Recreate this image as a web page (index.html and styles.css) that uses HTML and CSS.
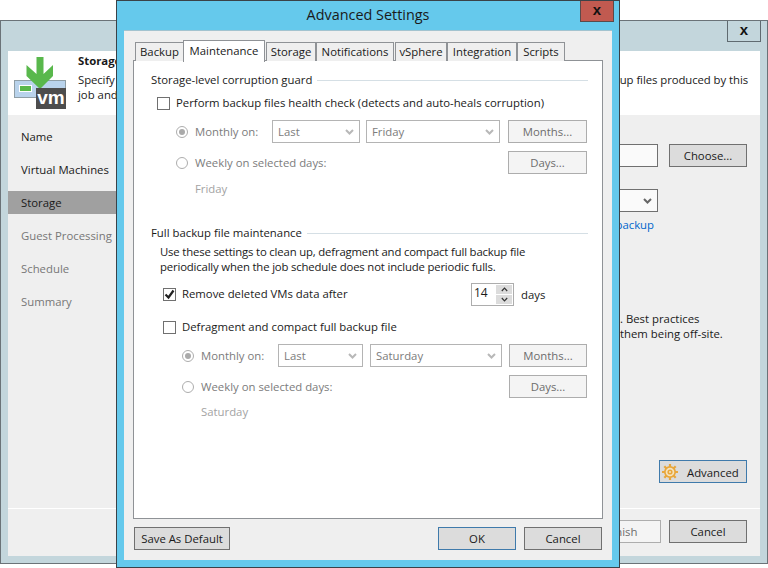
FILE: index.html
```html
<!DOCTYPE html>
<html lang="en">
<head>
<meta charset="utf-8">
<title>Advanced Settings</title>
<link rel="stylesheet" href="styles.css">
</head>
<body>
<svg class="defs" width="0" height="0" aria-hidden="true">
  <symbol id="chev" viewBox="0 0 9 6"><path d="M1 1l3.5 3.5L8 1" fill="none" stroke="currentColor" stroke-width="2"/></symbol>
</svg>

<section class="wizard">
  <div class="titlebar wizard-title"><span class="close close-plain">x</span></div>
  <div class="wizard-inner">
    <header class="wizard-head">
      <svg class="logo" width="54" height="54" viewBox="0 0 54 54">
        <rect x="0.500" y="24.500" width="51" height="17" fill="#b9d3ec" stroke="#8f9ea6"/>
        <rect x="5.500" y="29.500" width="12" height="6" fill="#59b84c" stroke="#fff"/>
        <path d="M22.500 1h7v17l9.500-9v11L26 33 12.500 20V9l10 9z" fill="#59b84c"/>
        <rect x="22" y="32" width="30" height="21" fill="#4d4d4d"/>
        <text x="37" y="48" class="logo-text" text-anchor="middle">vm</text>
      </svg>
      <div class="head-text">
        <div class="head-title">Storage</div>
        <div class="head-line">Specify processing proxy server to be used for source data retrieval, backup repository to store the backup files produced by this</div>
        <div>job and customize advanced job settings if required.</div>
      </div>
    </header>
    <div class="wizard-body">
      <nav class="steps">
        <div class="step">Name</div>
        <div class="step">Virtual Machines</div>
        <div class="step step-on">Storage</div>
        <div class="step step-off">Guest Processing</div>
        <div class="step step-off">Schedule</div>
        <div class="step step-off">Summary</div>
      </nav>
      <main class="wizard-main">
        <div class="path-row">
          <span class="field field-wide"></span>
          <span class="btn btn-w78">Choose...</span>
        </div>
        <div class="repo-row"><span class="field field-wide field-select"><svg class="chev chev-on" width="9" height="6"><use href="#chev"/></svg></span></div>
        <div class="map-row"><a class="link">Map backup</a></div>
        <div class="note">. Best practices<br>them being off-site.</div>
        <div class="adv-row">
          <span class="btn btn-adv">
            <svg class="gear" width="16" height="16" viewBox="0 0 16 16">
              <g stroke="#e8a73c" stroke-width="2.200">
                <path d="M8 0v16M0 8h16M2.300 2.300l11.400 11.400M13.700 2.300L2.300 13.700"/>
              </g>
              <circle cx="8" cy="8" r="6" fill="#e8a73c"/>
              <circle cx="8" cy="8" r="4.300" fill="#f6e3bd"/>
              <circle cx="8" cy="8" r="2.600" fill="#e8a73c"/>
              <circle cx="8" cy="8" r="1" fill="#f6e3bd"/>
            </svg>
            Advanced
          </span>
        </div>
      </main>
    </div>
    <footer class="wizard-foot">
      <span class="btn btn-w78 btn-off">Finish</span>
      <span class="btn btn-w78">Cancel</span>
    </footer>
  </div>
</section>

<section class="dialog">
  <div class="titlebar dialog-title">
    <span class="dialog-name">Advanced Settings</span>
    <span class="close close-red">x</span>
  </div>
  <div class="dialog-inner">
    <div class="tabs">
      <span class="tab tab-a">Backup</span>
      <span class="tab tab-on">Maintenance</span>
      <span class="tab tab-c">Storage</span>
      <span class="tab tab-d">Notifications</span>
      <span class="tab tab-e">vSphere</span>
      <span class="tab tab-f">Integration</span>
      <span class="tab tab-g">Scripts</span>
    </div>
    <div class="panel">
      <div class="legend"><span class="lbl">Storage-level corruption guard</span></div>
      <div class="check-row cr-1"><span class="box"></span><span class="lbl">Perform backup files health check (detects and auto-heals corruption)</span></div>
      <div class="opt-grid g1 first">
        <span class="radio-label"><span class="radio radio-on"></span>Monthly on:</span>
        <span class="sel">Last<svg class="chev" width="9" height="6"><use href="#chev"/></svg></span>
        <span class="sel">Friday<svg class="chev" width="9" height="6"><use href="#chev"/></svg></span>
        <span class="btn btn-off">Months...</span>
      </div>
      <div class="opt-grid g1 second">
        <span class="radio-label wide"><span class="radio"></span>Weekly on selected days:</span>
        <span class="btn btn-off col4">Days...</span>
      </div>
      <div class="day day-1">Friday</div>

      <div class="legend legend-2"><span class="lbl">Full backup file maintenance</span></div>
      <p class="desc">Use these settings to clean up, defragment and compact full backup file<br>periodically when the job schedule does not include periodic fulls.</p>
      <div class="check-row cr-2">
        <span class="box box-on"><svg width="11" height="11" viewBox="0 0 11 11"><path d="M1.500 5.500l3 3L9.500 1.500" fill="none" stroke="#222" stroke-width="2.200"/></svg></span><span class="lbl">Remove deleted VMs data after</span>
        <span class="spin">
          <span class="spin-val">14</span>
          <span class="spin-btns">
            <span class="spin-btn"><svg width="7" height="5" viewBox="0 0 7 5"><path d="M.8 4L3.500 1.200 6.200 4" fill="none" stroke="#333" stroke-width="1.200"/></svg></span>
            <span class="spin-btn"><svg width="7" height="5" viewBox="0 0 7 5"><path d="M.8 1L3.500 3.800 6.200 1" fill="none" stroke="#333" stroke-width="1.200"/></svg></span>
          </span>
        </span>
        <span class="days">days</span>
      </div>
      <div class="check-row cr-3"><span class="box"></span><span class="lbl">Defragment and compact full backup file</span></div>
      <div class="opt-grid g2 first">
        <span class="radio-label"><span class="radio radio-on"></span>Monthly on:</span>
        <span class="sel">Last<svg class="chev" width="9" height="6"><use href="#chev"/></svg></span>
        <span class="sel">Saturday<svg class="chev" width="9" height="6"><use href="#chev"/></svg></span>
        <span class="btn btn-off">Months...</span>
      </div>
      <div class="opt-grid g2 second">
        <span class="radio-label wide"><span class="radio"></span>Weekly on selected days:</span>
        <span class="btn btn-off col4">Days...</span>
      </div>
      <div class="day day-2">Saturday</div>
    </div>
    <div class="dialog-foot">
      <span class="btn btn-save">Save As Default</span>
      <span class="btn btn-w78 btn-focus">OK</span>
      <span class="btn btn-w78">Cancel</span>
    </div>
  </div>
</section>
</body>
</html>
```

FILE: styles.css
```css
* { box-sizing: border-box; }
html, body { margin: 0; padding: 0; }
body {
  position: relative;
  width: 768px;
  height: 568px;
  overflow: hidden;
  background: #fff;
  color: #1a1a1a;
  font: 11.35px/15px "Open Sans", "Liberation Sans", sans-serif;
}
.defs { position: absolute; }

/* windows on the desktop */
.wizard {
  position: absolute;
  left: 0; top: 20px;
  width: 768px; height: 544px;
  background: #c3d6dc;
  border: 1px solid #6b7378;
  padding: 0 7px 7px 7px;
  display: flex;
  flex-direction: column;
}
.dialog {
  position: absolute;
  left: 116px; top: 0;
  width: 504px; height: 568px;
  background: #65c9ec;
  border: 1px solid #3a4248;
  padding: 0 7px 7px 7px;
  display: flex;
  flex-direction: column;
}
.titlebar { height: 30px; flex: none; display: flex; justify-content: flex-end; position: relative; }
.dialog-title { height: 29px; }
.dialog-name {
  position: absolute;
  left: 0; right: 0; top: 4px;
  text-align: center;
  font-size: 14.4px;
  line-height: 20px;
  color: #1a1a1a;
}
.close {
  width: 34px; height: 21px;
  border: 1px solid #5f6a70;
  border-top: 0;
  display: flex; align-items: center; justify-content: center;
  font: bold 15px/15px "Liberation Sans", sans-serif;
  color: #111;
  padding-bottom: 4px;
}
.close-plain { margin-right: -1px; }
.close-red { background: #c15a50; margin-right: -2px; border-color: #5b4a4a; position: relative; }

/* wizard */
.wizard-inner {
  flex: 1;
  display: flex;
  flex-direction: column;
  background: #efefef;
  min-height: 0;
}
.wizard-head {
  height: 64px; flex: none;
  background: #fff;
  display: flex;
}
.logo { margin: 5px 0 0 6px; flex: none; }
.logo-text { font: bold 19px "Liberation Sans", sans-serif; fill: #fff; }
.head-text { margin-left: 10px; padding-top: 2px; width: 670px; flex: none; }
.head-title { font-weight: 700; margin-bottom: 4px; }
.head-line { text-align-last: justify; white-space: nowrap; letter-spacing: -0.09px; }
.wizard-body { flex: 1; display: flex; min-height: 0; border-bottom: 1px solid #fff; }
.steps { width: 108px; flex: none; padding-top: 10px; display: flex; flex-direction: column; gap: 10px; }
.step { height: 23px; line-height: 23px; padding-left: 13px; white-space: nowrap; }
.step-on { background: #a0a0a0; }
.step-off { color: #777; }
.wizard-main { flex: 1; min-width: 0; display: flex; flex-direction: column; padding: 29px 13px 25px 0; }
.path-row { display: flex; justify-content: flex-end; gap: 11px; }
.field { height: 23px; background: #fafafa; border: 1px solid #707070; display: block; }
.field-wide { width: 200px; }
.field-select { display: flex; align-items: center; justify-content: flex-end; padding-right: 4px; }
.repo-row { margin: 22px 89px 0 0; display: flex; justify-content: flex-end; }
.map-row { margin: 5px 93px 0 0; text-align: right; height: 16px; }
.link { color: #0066cc; }
.note { margin: 78px 0 0 504px; white-space: nowrap; }
.adv-row { margin-top: auto; display: flex; justify-content: flex-end; }
.btn {
  height: 23px;
  display: flex; align-items: center; justify-content: center;
  background: #dcdcdc;
  border: 1px solid #707070;
  color: #1a1a1a;
  white-space: nowrap;
}
.btn-w78 { width: 78px; }
.btn-off { background: #f4f4f4; border-color: #adadad; color: #6d6d6d; }
.btn-focus { border-color: #3f7aab; }
.btn-adv { width: 88px; border-color: #3f7aab; justify-content: flex-start; padding: 1px 0 0 2px; gap: 9px; }
.gear { flex: none; }
.wizard-foot { height: 47px; flex: none; display: flex; justify-content: flex-end; gap: 8px; padding: 11px 13px 0 0; }

/* dialog */
.dialog-inner {
  flex: 1;
  min-height: 0;
  background: #efefef;
  padding: 9px 9px 0 9px;
  display: flex;
  flex-direction: column;
  border-top: 1px solid #a3c3cf;
}
.tabs { height: 20px; flex: none; display: flex; padding-left: 2px; position: relative; z-index: 1; }
.tab {
  height: 19px;
  margin-top: 2px;
  padding-bottom: 2px;
  background: #efefef;
  border: 1px solid #8f9296;
  border-bottom: 0;
  display: flex; align-items: center; justify-content: center;
  white-space: nowrap;
}
.tab-a { width: 48px; border-right: 0; }
.tab-on { width: 82px; height: 22px; margin: 0 1px 0 0; background: #fff; padding-bottom: 2px; }
.tab-c { width: 50px; }
.tab-d { width: 78px; margin-right: 1px; }
.tab-e { width: 52px; }
.tab-f { width: 70px; }
.tab-g { width: 48px; }
.panel {
  height: 459px; flex: none;
  background: #fff;
  border: 1px solid #8f9296;
  padding: 11px 14px 0 17px;
}
.lbl { padding-bottom: 2px; }
.legend { height: 16px; display: flex; align-items: center; gap: 5px; white-space: nowrap; }
.legend::after { content: ""; flex: 1; height: 1px; background: #d5dfe5; }
.legend-2 { margin-top: 28px; }
.check-row { display: flex; align-items: center; white-space: nowrap; }
.box {
  width: 13px; height: 13px; flex: none;
  margin-right: 6px;
  background: #fff;
  border: 1px solid #707070;
  display: flex; align-items: center; justify-content: center;
}
.box-on { background: #fff; }
.cr-1 { margin: 8px 0 0 6px; height: 14px; }
.cr-2 { margin: 9px 44px 0 12px; height: 23px; }
.cr-3 { margin: 14px 0 0 12px; height: 14px; }
.opt-grid { display: grid; height: 23px; align-items: stretch; color: #7c7c7c; }
.g1 { grid-template-columns: 90px 88px 134px 79px; column-gap: 6px; margin-left: 25px; }
.g1 .btn { margin-left: 2px; width: 79px; }
.g2 { grid-template-columns: 89px 85px 132px 78px; column-gap: 7px; margin-left: 31px; }
.first { margin-top: 10px; }
.second { margin-top: 8px; }
.col4 { grid-column: 4; }
.radio-label { display: flex; align-items: center; white-space: nowrap; }
.wide { grid-column: 1 / 4; }
.radio {
  width: 12px; height: 12px; flex: none;
  margin-right: 7px;
  border: 1px solid #adadad;
  border-radius: 50%;
  background: #fff;
  display: flex; align-items: center; justify-content: center;
}
.radio-on::after { content: ""; width: 6px; height: 6px; border-radius: 50%; background: #aaa; }
.sel {
  height: 23px;
  border: 1px solid #b4b4b4;
  background: #fff;
  padding: 0 4px 0 5px;
  display: flex; align-items: center; justify-content: space-between;
  color: #7c7c7c;
}
.chev { color: #b8b8b8; flex: none; margin-right: 1px; }
.chev-on { color: #666; }
.day { height: 16px; color: #a3a3a3; }
.day-1 { margin: 7px 0 0 44px; }
.day-2 { margin: 6px 0 0 50px; }
.desc { margin: 3px 0 0 9px; white-space: nowrap; letter-spacing: -0.17px; }
.spin {
  margin-left: auto;
  width: 43px; height: 23px; flex: none;
  border: 1px solid #adadad;
  background: #fff;
  display: flex;
  padding: 1px;
}
.spin-val { flex: 1; padding-left: 1px; font-size: 12px; line-height: 16px; }
.spin-btns { width: 16px; display: flex; flex-direction: column; gap: 1px; }
.spin-btn { flex: 1; background: #dcdcdc; display: flex; align-items: center; justify-content: center; }
.days { margin-left: 7px; width: 23px; }
.dialog-foot { display: flex; gap: 8px; padding: 8px 1px 0 1px; }
.btn-save { width: 96px; margin-right: auto; }
```
